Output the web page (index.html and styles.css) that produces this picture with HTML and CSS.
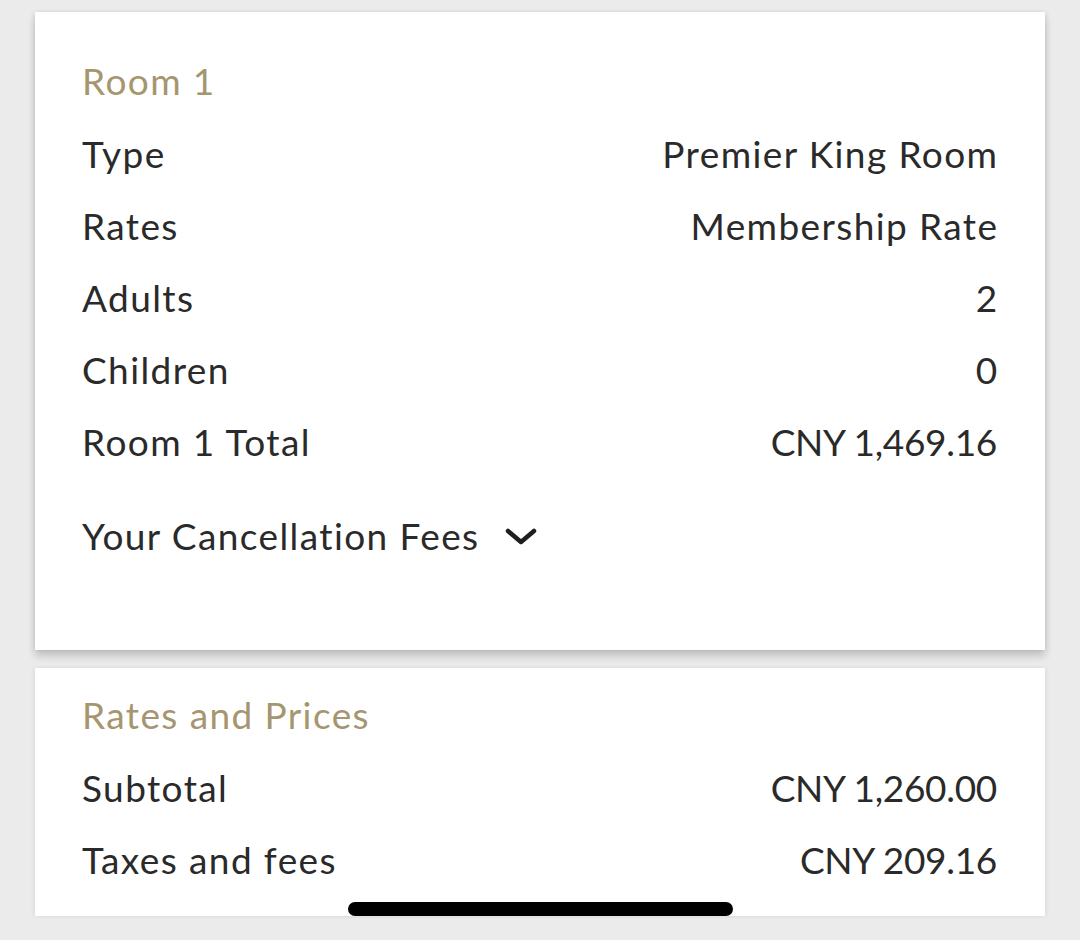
FILE: index.html
```html
<!DOCTYPE html>
<html>
<head>
<meta charset="utf-8">
<link rel="stylesheet" href="styles.css">
</head>
<body>
<div class="page">
  <section class="card card-room">
    <h2 class="card-title">Room 1</h2>
    <div class="row"><span>Type</span><span class="val">Premier King Room</span></div>
    <div class="row"><span>Rates</span><span class="val">Membership Rate</span></div>
    <div class="row"><span>Adults</span><span class="val num">2</span></div>
    <div class="row"><span>Children</span><span class="val num">0</span></div>
    <div class="row"><span>Room 1 Total</span><span class="val num">CNY 1,469.16</span></div>
    <div class="toggle">
      <span>Your Cancellation Fees</span>
      <svg class="chev" width="34" height="20" viewBox="0 0 34 20"><path d="M4 5 L17 16 L30 5" fill="none" stroke="#1e1e1e" stroke-width="4.5" stroke-linecap="round" stroke-linejoin="round"/></svg>
    </div>
  </section>
  <section class="card card-rates">
    <h2 class="card-title">Rates and Prices</h2>
    <div class="row"><span>Subtotal</span><span class="val num">CNY 1,260.00</span></div>
    <div class="row"><span>Taxes and fees</span><span class="val num">CNY 209.16</span></div>
  </section>
  <div class="home-indicator"></div>
</div>
</body>
</html>
```

FILE: styles.css
```css
html, body {
  margin: 0;
  padding: 0;
  background: #ebebeb;
}
.page {
  position: relative;
  width: 1080px;
  height: 940px;
  overflow: hidden;
  padding-top: 12px;
  box-sizing: border-box;
  font-family: Lato, "Liberation Sans", sans-serif;
  color: #2a2a2a;
  letter-spacing: 1.4px;
}
.card {
  background: #fff;
  margin: 0 35px;
  padding: 0 48px 0 47px;
}
.card-room {
  height: 638px;
  box-sizing: border-box;
  padding-top: 47px;
  box-shadow: 0 6px 8px rgba(0,0,0,0.18), -2px 0 4px rgba(0,0,0,0.05), 2px 0 4px rgba(0,0,0,0.05);
  position: relative;
  z-index: 1;
}
.card-rates {
  margin-top: 18px;
  height: 248px;
  box-sizing: border-box;
  padding-top: 25px;
  box-shadow: -2px 0 4px rgba(0,0,0,0.05), 2px 0 4px rgba(0,0,0,0.05);
}
.card-title {
  margin: 0;
  font-weight: 400;
  font-size: 37px;
  line-height: 44px;
  color: #a59670;
  height: 44px;
  margin-bottom: 29px;
}
.row {
  display: flex;
  justify-content: space-between;
  font-size: 37px;
  line-height: 44px;
  height: 72px;
  align-items: flex-start;
}
.val {
  margin-right: -1.4px;
}
.num {
  letter-spacing: -0.3px;
  margin-right: 0;
}
.toggle {
  margin-top: 22px;
  display: flex;
  align-items: center;
  gap: 24px;
  font-size: 37px;
  line-height: 44px;
}
.chev {
  display: block;
}
.home-indicator {
  position: absolute;
  left: 348px;
  top: 902px;
  width: 385px;
  height: 14px;
  border-radius: 7px;
  background: #000;
}
```
